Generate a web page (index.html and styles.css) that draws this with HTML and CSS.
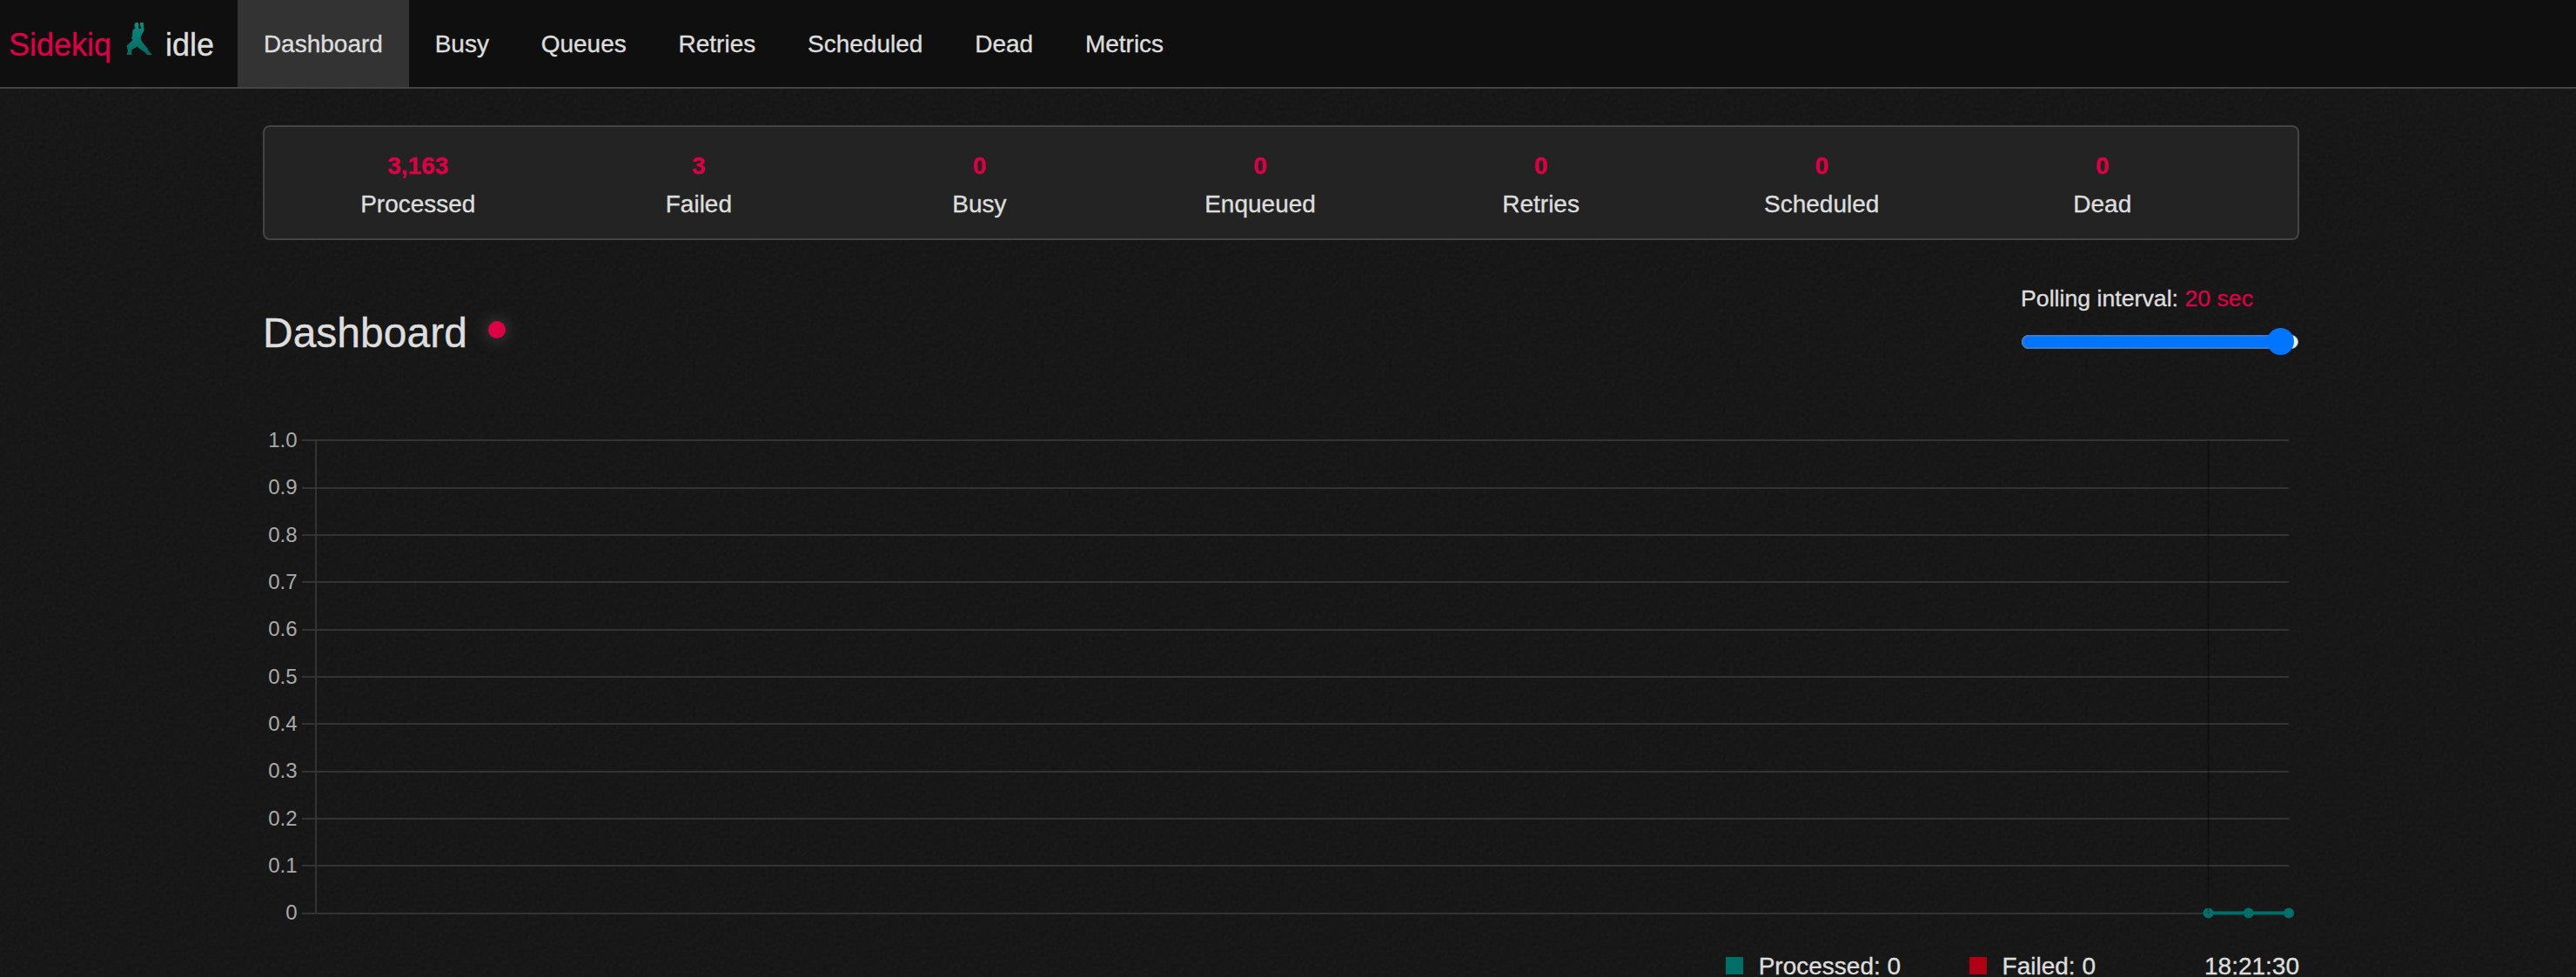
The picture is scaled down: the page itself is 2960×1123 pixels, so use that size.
FILE: index.html
```html
<!DOCTYPE html>
<html lang="en">
<head>
<meta charset="utf-8">
<title>Sidekiq</title>
<link rel="stylesheet" href="styles.css">
</head>
<body>
<header class="navbar">
  <a class="brand">
    <span class="brand-name">Sidekiq</span>
    <svg class="logo" viewBox="0 0 36 40">
      <defs><linearGradient id="g" x1="0" y1="0" x2="0" y2="1"><stop offset="0" stop-color="#0c8c80"/><stop offset="1" stop-color="#04695f"/></linearGradient></defs>
      <path fill="url(#g)" d="M11.500 3 13 1H15.500L16.500 3 16 7 17.500 8.500 19.500 7 18 5V1H21.800L22 5 22.800 9 21.500 12 19.500 15.500 18.500 19 19.500 22 23 26.500 26.500 30.500 28 34 32 38H26L24 35.500 18 31.500 14.500 28.500 11 31 8.500 32 8 36 9 38H2.500L4 34 2.500 27.500 6 24.500 9.500 21 8 18.500 9 17 9.500 9.500 12.500 7.500 11.500 5Z"/>
    </svg>
    <span class="status">idle</span>
  </a>
  <nav class="nav">
    <a class="active">Dashboard</a><a>Busy</a><a>Queues</a><a>Retries</a><a>Scheduled</a><a>Dead</a><a>Metrics</a>
  </nav>
</header>
<main class="container">
  <ul class="summary">
    <li><b>3,163</b><span>Processed</span></li>
    <li><b>3</b><span>Failed</span></li>
    <li><b>0</b><span>Busy</span></li>
    <li><b>0</b><span>Enqueued</span></li>
    <li><b>0</b><span>Retries</span></li>
    <li><b>0</b><span>Scheduled</span></li>
    <li><b>0</b><span>Dead</span></li>
  </ul>
  <div class="title-row">
    <h1>Dashboard<span class="beacon"></span></h1>
    <div class="interval">
      <div class="interval-label">Polling interval: <span>20 sec</span></div>
      <div class="slider"><div class="fill"></div><div class="thumb"></div></div>
    </div>
  </div>
  <svg class="chart" width="2340" height="580" viewBox="302 490 2340 580">
    <g class="grid">
      <path d="M347 506H2630M347 561H2630M347 615H2630M347 669H2630M347 724H2630M347 778H2630M347 832H2630M347 887H2630M347 941H2630M347 995H2630M347 1050H2630M363 507V1050"/>
    </g>
    <g class="ticks">
      <text x="341.500" y="514">1.0</text><text x="341.500" y="568">0.9</text><text x="341.500" y="623">0.8</text><text x="341.500" y="677">0.7</text><text x="341.500" y="731">0.6</text><text x="341.500" y="786">0.5</text><text x="341.500" y="840">0.4</text><text x="341.500" y="894">0.3</text><text x="341.500" y="949">0.2</text><text x="341.500" y="1003">0.1</text><text x="341.500" y="1057">0</text>
    </g>
    <g class="series"><path d="M2537.500 1049.500H2630"/><circle cx="2537.500" cy="1049.500" r="6"/><circle cx="2583.700" cy="1049.500" r="6"/><circle cx="2630" cy="1049.500" r="6"/></g>
    <path class="marker" d="M2537.500 506V1050"/>
  </svg>
  <div class="legend">
    <span class="item"><i class="swatch processed"></i>Processed: 0</span>
    <span class="item"><i class="swatch failed"></i>Failed: 0</span>
    <span class="time">18:21:30</span>
  </div>
</main>
</body>
</html>
```
FILE: styles.css
```css
* { box-sizing: border-box; }
html, body { height: 100%; overflow: hidden; }
body {
  margin: 0;
  color: #ddd;
  font: 28px/44px "Liberation Sans", Arial, sans-serif;
  -webkit-text-stroke: .35px currentColor;
  background: #171717 url("data:image/svg+xml,%3Csvg xmlns='http://www.w3.org/2000/svg' width='400' height='400'%3E%3Cfilter id='n' x='0' y='0' width='100%25' height='100%25' color-interpolation-filters='sRGB'%3E%3CfeTurbulence type='fractalNoise' baseFrequency='.25' numOctaves='2' stitchTiles='stitch'/%3E%3CfeColorMatrix values='1 .5 .5 0 -.5 .5 1 .5 0 -.5 .5 .5 1 0 -.5 0 0 0 0 .03'/%3E%3C/filter%3E%3Crect width='400' height='400' fill='%23141414'/%3E%3Crect width='400' height='400' filter='url(%23n)'/%3E%3C/svg%3E");
}
.navbar {
  display: flex;
  height: 102px;
  background: #0f0f0f;
  border-bottom: 2px solid #444;
}
.brand {
  display: flex;
  width: 273px;
  padding-left: 10px;
  font-size: 36px;
  line-height: 103px;
}
.brand-name { width: 118px; color: #dd0045; }
.logo { width: 36px; height: 40px; margin: 25px 11px 0 15px; }
.nav { display: flex; line-height: 101px; }
.nav a { height: 100px; padding: 0 29.900px; }
.nav .active { background: #333; }
.container { width: 2340px; margin: 42px 0 0 302px; }
.summary {
  display: flex;
  height: 132px;
  margin: 0;
  padding: 23px 63px 0 15px;
  list-style: none;
  background: #232323;
  border: 2px solid #444;
  border-radius: 8px;
}
.summary li { flex: 1; display: flex; flex-direction: column; text-align: center; }
.summary b { color: #dd0045; }
.title-row { display: flex; justify-content: space-between; height: 214px; }
h1 {
  display: flex;
  margin: 77px 0 0;
  font-size: 48px;
  font-weight: 400;
  line-height: 60px;
}
.beacon {
  width: 20px;
  height: 20px;
  margin: 16px 0 0 24px;
  border-radius: 50%;
  background: #dd0045;
  box-shadow: 0 0 18px 1px #444;
}
.interval { width: 320px; padding-top: 47px; }
.interval-label { font-size: 26.700px; line-height: 40px; white-space: nowrap; }
.interval-label span { color: #dd0045; }
.slider {
  position: relative;
  width: 318px;
  height: 16px;
  margin: 22px 0 0 1px;
  border-radius: 8px;
  background: #efefef;
  border: 1px solid #b2b2b2;
}
.fill { width: 300px; height: 16px; margin: -1px; border: 2px solid #3f78c8; border-radius: 8px; background: #0075ff; }
.thumb { position: absolute; left: 281px; top: -9px; width: 31px; height: 31px; border-radius: 50%; background: #0075ff; }
.chart { display: block; }
.grid path { fill: none; stroke: #333; stroke-width: 2; }
.ticks text { fill: #aaa; font-size: 24px; text-anchor: end; -webkit-text-stroke: 0; }
.series path { stroke: #006f68; stroke-width: 4; }
.series circle { fill: #006f68; }
.marker { stroke: #000; stroke-opacity: .3; stroke-width: 2; }
.legend { display: flex; justify-content: flex-end; padding-top: 19px; }
.item { display: flex; }
.swatch { width: 20px; height: 20px; margin: 11px 18px 0 0; }
.item + .item { margin-left: 78.500px; }
.processed { background: #006f68; }
.failed { background: #af0014; }
.time { margin-left: 125px; }
```
